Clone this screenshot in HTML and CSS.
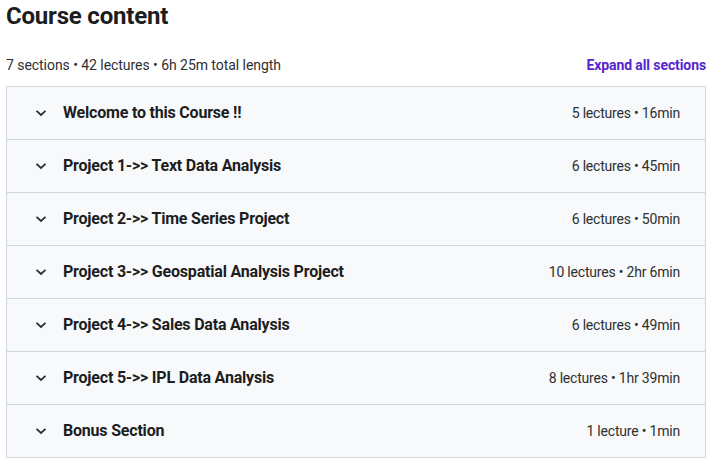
FILE: index.html
```html
<!DOCTYPE html>
<html lang="en">
<head>
  <meta charset="UTF-8">
  <title>Course content</title>
  <link rel="stylesheet" href="styles.css">
</head>
<body>
  <h2 class="title">Course content</h2>

  <div class="summary">
    <span>7 sections • 42 lectures • 6h 25m total length</span>
    <a href="#" class="expand">Expand all sections</a>
  </div>

  <div class="sections">
    <div class="section">
      <svg class="chev" viewBox="0 0 12 8"><path d="M1.5 1.8 L6 6 L10.5 1.8" /></svg>
      <span class="name">Welcome to this Course !!</span>
      <span class="meta">5 lectures • 16min</span>
    </div>
    <div class="section">
      <svg class="chev" viewBox="0 0 12 8"><path d="M1.5 1.8 L6 6 L10.5 1.8" /></svg>
      <span class="name">Project 1-&gt;&gt; Text Data Analysis</span>
      <span class="meta">6 lectures • 45min</span>
    </div>
    <div class="section">
      <svg class="chev" viewBox="0 0 12 8"><path d="M1.5 1.8 L6 6 L10.5 1.8" /></svg>
      <span class="name">Project 2-&gt;&gt; Time Series Project</span>
      <span class="meta">6 lectures • 50min</span>
    </div>
    <div class="section">
      <svg class="chev" viewBox="0 0 12 8"><path d="M1.5 1.8 L6 6 L10.5 1.8" /></svg>
      <span class="name">Project 3-&gt;&gt; Geospatial Analysis Project</span>
      <span class="meta">10 lectures • 2hr 6min</span>
    </div>
    <div class="section">
      <svg class="chev" viewBox="0 0 12 8"><path d="M1.5 1.8 L6 6 L10.5 1.8" /></svg>
      <span class="name">Project 4-&gt;&gt; Sales Data Analysis</span>
      <span class="meta">6 lectures • 49min</span>
    </div>
    <div class="section">
      <svg class="chev" viewBox="0 0 12 8"><path d="M1.5 1.8 L6 6 L10.5 1.8" /></svg>
      <span class="name">Project 5-&gt;&gt; IPL Data Analysis</span>
      <span class="meta">8 lectures • 1hr 39min</span>
    </div>
    <div class="section">
      <svg class="chev" viewBox="0 0 12 8"><path d="M1.5 1.8 L6 6 L10.5 1.8" /></svg>
      <span class="name">Bonus Section</span>
      <span class="meta">1 lecture • 1min</span>
    </div>
  </div>
</body>
</html>
```

FILE: styles.css
```css
/* ========== Base ========== */
body {
  font-family: Roboto, "Liberation Sans", sans-serif;
  margin: 0;
  padding: 0 6px;
  background: #fff;
  color: #2d2f31;
}
.title {
  margin: 0;
  padding-top: 2px;
  font-size: 24px;
  line-height: 29px;
  font-weight: 700;
  letter-spacing: -0.2px;
  color: #1c1d1f;
}
.summary {
  display: flex;
  justify-content: space-between;
  align-items: center;
  margin-top: 23px;
  height: 22px;
  font-size: 14px;
  letter-spacing: -0.05px;
}
.expand {
  color: #5624d0;
  font-weight: 700;
  text-decoration: none;
  letter-spacing: -0.1px;
}

/* ========== Lista de seções ========== */
.sections {
  margin-top: 10px;
  border: 1px solid #d1d7dc;
}
.section {
  display: flex;
  align-items: center;
  height: 51px;
  padding: 0 25px 1px 28px;
  background: #f7f9fa;
  border-bottom: 1px solid #d1d7dc;
}
.section:last-child {
  border-bottom: none;
}
.chev {
  width: 12px;
  height: 8px;
  fill: none;
  stroke: #2d2f31;
  stroke-width: 1.8;
  margin-right: 16px;
}
.name {
  flex: 1;
  font-size: 16px;
  font-weight: 700;
  letter-spacing: -0.2px;
  color: #1c1d1f;
}
.meta {
  font-size: 14px;
  letter-spacing: -0.2px;
}
```
